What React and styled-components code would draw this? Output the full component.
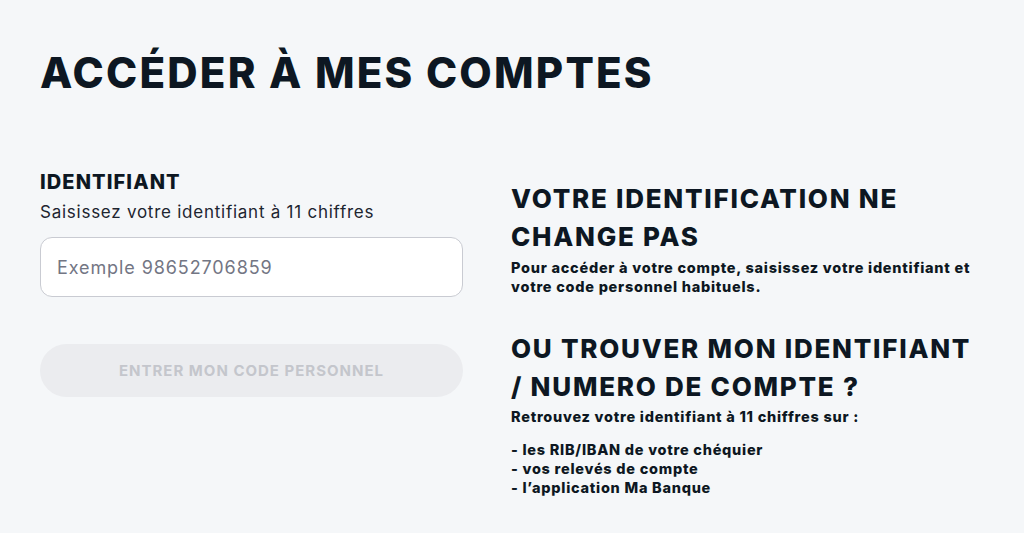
import React from 'react';
import styled, { createGlobalStyle } from 'styled-components';

const GlobalStyle = createGlobalStyle`
  html, body {
    margin: 0;
    background: #f5f7f9;
  }
  body {
    font-family: Inter, "Liberation Sans", sans-serif;
    color: #0d1722;
  }
`

const Page = styled.div`
  padding: 43px 40px 0 40px;
  height: 533px;
  box-sizing: border-box;
`

const Title = styled.h1`
  margin: 0;
  font-size: 42px;
  line-height: 60px;
  font-weight: 800;
  letter-spacing: 2.2px;
`

const Columns = styled.div`
  display: grid;
  grid-template-columns: 423px 462px;
  column-gap: 48px;
  margin-top: 67px;
`

const Form = styled.div`
  display: flex;
  flex-direction: column;
`

const Label = styled.div`
  font-size: 20px;
  font-weight: 800;
  line-height: 24px;
  letter-spacing: 1.1px;
`

const Hint = styled.div`
  font-size: 17px;
  line-height: 24px;
  margin-top: 6px;
  letter-spacing: 0.75px;
  color: #1d2530;
`

const Input = styled.input`
  margin-top: 13px;
  height: 60px;
  box-sizing: border-box;
  border: 1px solid #c9cbd2;
  border-radius: 12px;
  background: #fff;
  padding: 0 16px;
  font-family: inherit;
  font-size: 18px;
  letter-spacing: 0.9px;
  color: #0d1722;
  outline: none;
  &::placeholder {
    color: #737684;
  }
`

const Button = styled.button`
  margin-top: 47px;
  height: 53px;
  border: none;
  border-radius: 27px;
  background: #ebecef;
  color: #c4c6cc;
  font-family: inherit;
  font-size: 15px;
  font-weight: 700;
  letter-spacing: 1px;
`

const Info = styled.div`
  display: flex;
  flex-direction: column;
  padding-top: 10px;
`

const Heading = styled.h2`
  margin: 0;
  font-size: 26px;
  line-height: 38px;
  font-weight: 800;
  letter-spacing: 1.75px;
  margin-top: ${p => p.$gap || 0}px;
`

const Text = styled.p`
  margin: 0;
  font-size: 14.5px;
  line-height: 19px;
  font-weight: 800;
  letter-spacing: 0.74px;
  margin-top: ${p => p.$gap || 0}px;
`

const List = styled.ul`
  list-style: none;
  margin: 14px 0 0 0;
  padding: 0;
  font-size: 14.5px;
  line-height: 19px;
  font-weight: 800;
  letter-spacing: 0.74px;
`

const App = () => {
  return (
    <Page>
      <GlobalStyle />
      <Title>ACCÉDER À MES COMPTES</Title>
      <Columns>
        <Form>
          <Label>IDENTIFIANT</Label>
          <Hint>Saisissez votre identifiant à 11 chiffres</Hint>
          <Input placeholder="Exemple 98652706859" />
          <Button disabled>ENTRER MON CODE PERSONNEL</Button>
        </Form>
        <Info>
          <Heading>VOTRE IDENTIFICATION NE CHANGE PAS</Heading>
          <Text $gap={2}>Pour accéder à votre compte, saisissez votre identifiant et votre code personnel habituels.</Text>
          <Heading $gap={34}>OU TROUVER MON IDENTIFIANT / NUMERO DE COMPTE ?</Heading>
          <Text $gap={1}>Retrouvez votre identifiant à 11 chiffres sur :</Text>
          <List>
            <li>- les RIB/IBAN de votre chéquier</li>
            <li>- vos relevés de compte</li>
            <li>- l’application Ma Banque</li>
          </List>
        </Info>
      </Columns>
    </Page>
  )
}

export default App;
